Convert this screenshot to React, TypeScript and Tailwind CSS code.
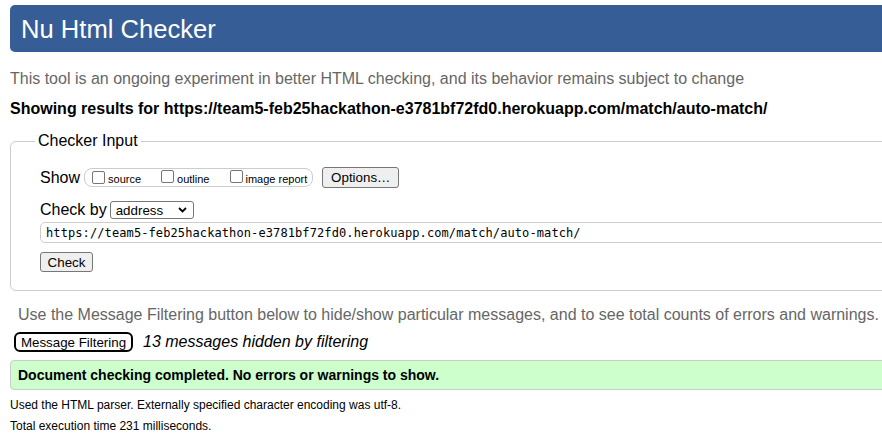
import React from "react";

function Box() {
  return (
    <span className="inline-block w-[13px] h-[13px] border border-[#767676] rounded-[2px] bg-white shrink-0" />
  );
}

export default function App() {
  return (
    <div className="w-[882px] h-[436px] overflow-hidden bg-white text-black font-['Liberation_Sans',Arial,sans-serif]">
      <div className="pt-[5px] pl-[10px]">
        <h1 className="h-[47px] w-[900px] rounded-l-[5px] bg-[#365d95] text-white text-[25.6px] leading-[30px] pl-[11px] flex items-center">
          Nu Html Checker
        </h1>
      </div>
      <p className="mt-[18px] ml-[10px] text-[16px] leading-[18px] text-[#666] whitespace-nowrap">
        This tool is an ongoing experiment in better HTML checking, and its behavior remains subject to change
      </p>
      <p className="mt-[12px] ml-[10px] text-[16px] leading-[18px] font-bold whitespace-nowrap">
        Showing results for https://team5-feb25hackathon-e3781bf72fd0.herokuapp.com/match/auto-match/
      </p>
      <fieldset className="mt-[14px] ml-[10px] w-[900px] border border-[#cccccc] rounded-l-[6px] pl-[24px] pb-[18px]">
        <legend className="px-[3px] text-[16px] leading-[18px]">Checker Input</legend>
        <div className="pl-[5px]">
          <div className="mt-[17px] h-[21px] flex items-center">
            <span className="text-[16px] leading-[18px]">Show</span>
            <div className="ml-[4px] h-[19px] flex items-center border border-[#cccccc] rounded-[8px] pl-[7px] pr-[5px]">
              <Box />
              <span className="ml-[3px] text-[11px] leading-[12px] mt-[3px]">source</span>
              <span className="ml-[20px]"><Box /></span>
              <span className="ml-[3px] text-[11px] leading-[12px] mt-[3px]">outline</span>
              <span className="ml-[21px]"><Box /></span>
              <span className="ml-[2px] text-[11px] leading-[12px] mt-[3px]">image report</span>
            </div>
            <button className="ml-[9px] h-[21px] w-[77px] bg-[#efefef] border border-[#767676] rounded-[3px] text-[13.33px] leading-[15px] flex items-center justify-center">
              Options…
            </button>
          </div>
          <div className="mt-[13px] h-[18px] flex items-center">
            <span className="text-[16px] leading-[18px]">Check by</span>
            <div className="ml-[3px] h-[18px] w-[84px] border border-[#767676] rounded-[3px] flex items-center justify-between pl-[5px] pr-[5px]">
              <span className="text-[13.33px] leading-[15px]">address</span>
              <svg width="9" height="6" viewBox="0 0 9 6" className="mr-[1px]">
                <path d="M1 1 L4.5 4.5 L8 1" fill="none" stroke="#000" strokeWidth="1.8" />
              </svg>
            </div>
          </div>
          <div className="mt-[3px] h-[21px] w-[860px] border border-[#cccccc] rounded-l-[5px] flex items-center pl-[5px]">
            <span className="font-['DejaVu_Sans_Mono',monospace] text-[12px] leading-[14px] tracking-[0.1px] whitespace-nowrap">
              https://team5-feb25hackathon-e3781bf72fd0.herokuapp.com/match/auto-match/
            </span>
          </div>
          <button className="mt-[9px] h-[20px] w-[53px] bg-[#efefef] border border-[#767676] rounded-[3px] text-[13.33px] leading-[15px] flex items-center justify-center">
            Check
          </button>
        </div>
      </fieldset>
      <p className="mt-[15px] ml-[18px] text-[16px] leading-[18px] text-[#666] whitespace-nowrap">
        Use the Message Filtering button below to hide/show particular messages, and to see total counts of errors and warnings.
      </p>
      <div className="mt-[8px] ml-[14px] h-[20px] flex items-center">
        <button className="h-[20px] w-[119px] border-2 border-black rounded-[6px] bg-white text-[13.33px] leading-[15px] flex items-center justify-center">
          Message Filtering
        </button>
        <span className="ml-[10px] italic text-[16px] leading-[18px]">13 messages hidden by filtering</span>
      </div>
      <div className="mt-[8px] ml-[10px] w-[900px] h-[30px] border border-[#cccccc] rounded-l-[4px] bg-[#ccffcc] flex items-center pl-[7px]">
        <span className="font-bold text-[14px] leading-[16px]">Document checking completed. No errors or warnings to show.</span>
      </div>
      <p className="mt-[8px] ml-[10px] text-[12px] leading-[14px] whitespace-nowrap">
        Used the HTML parser. Externally specified character encoding was utf-8.
      </p>
      <p className="mt-[7px] ml-[10px] text-[12px] leading-[14px] whitespace-nowrap">
        Total execution time 231 milliseconds.
      </p>
    </div>
  );
}
